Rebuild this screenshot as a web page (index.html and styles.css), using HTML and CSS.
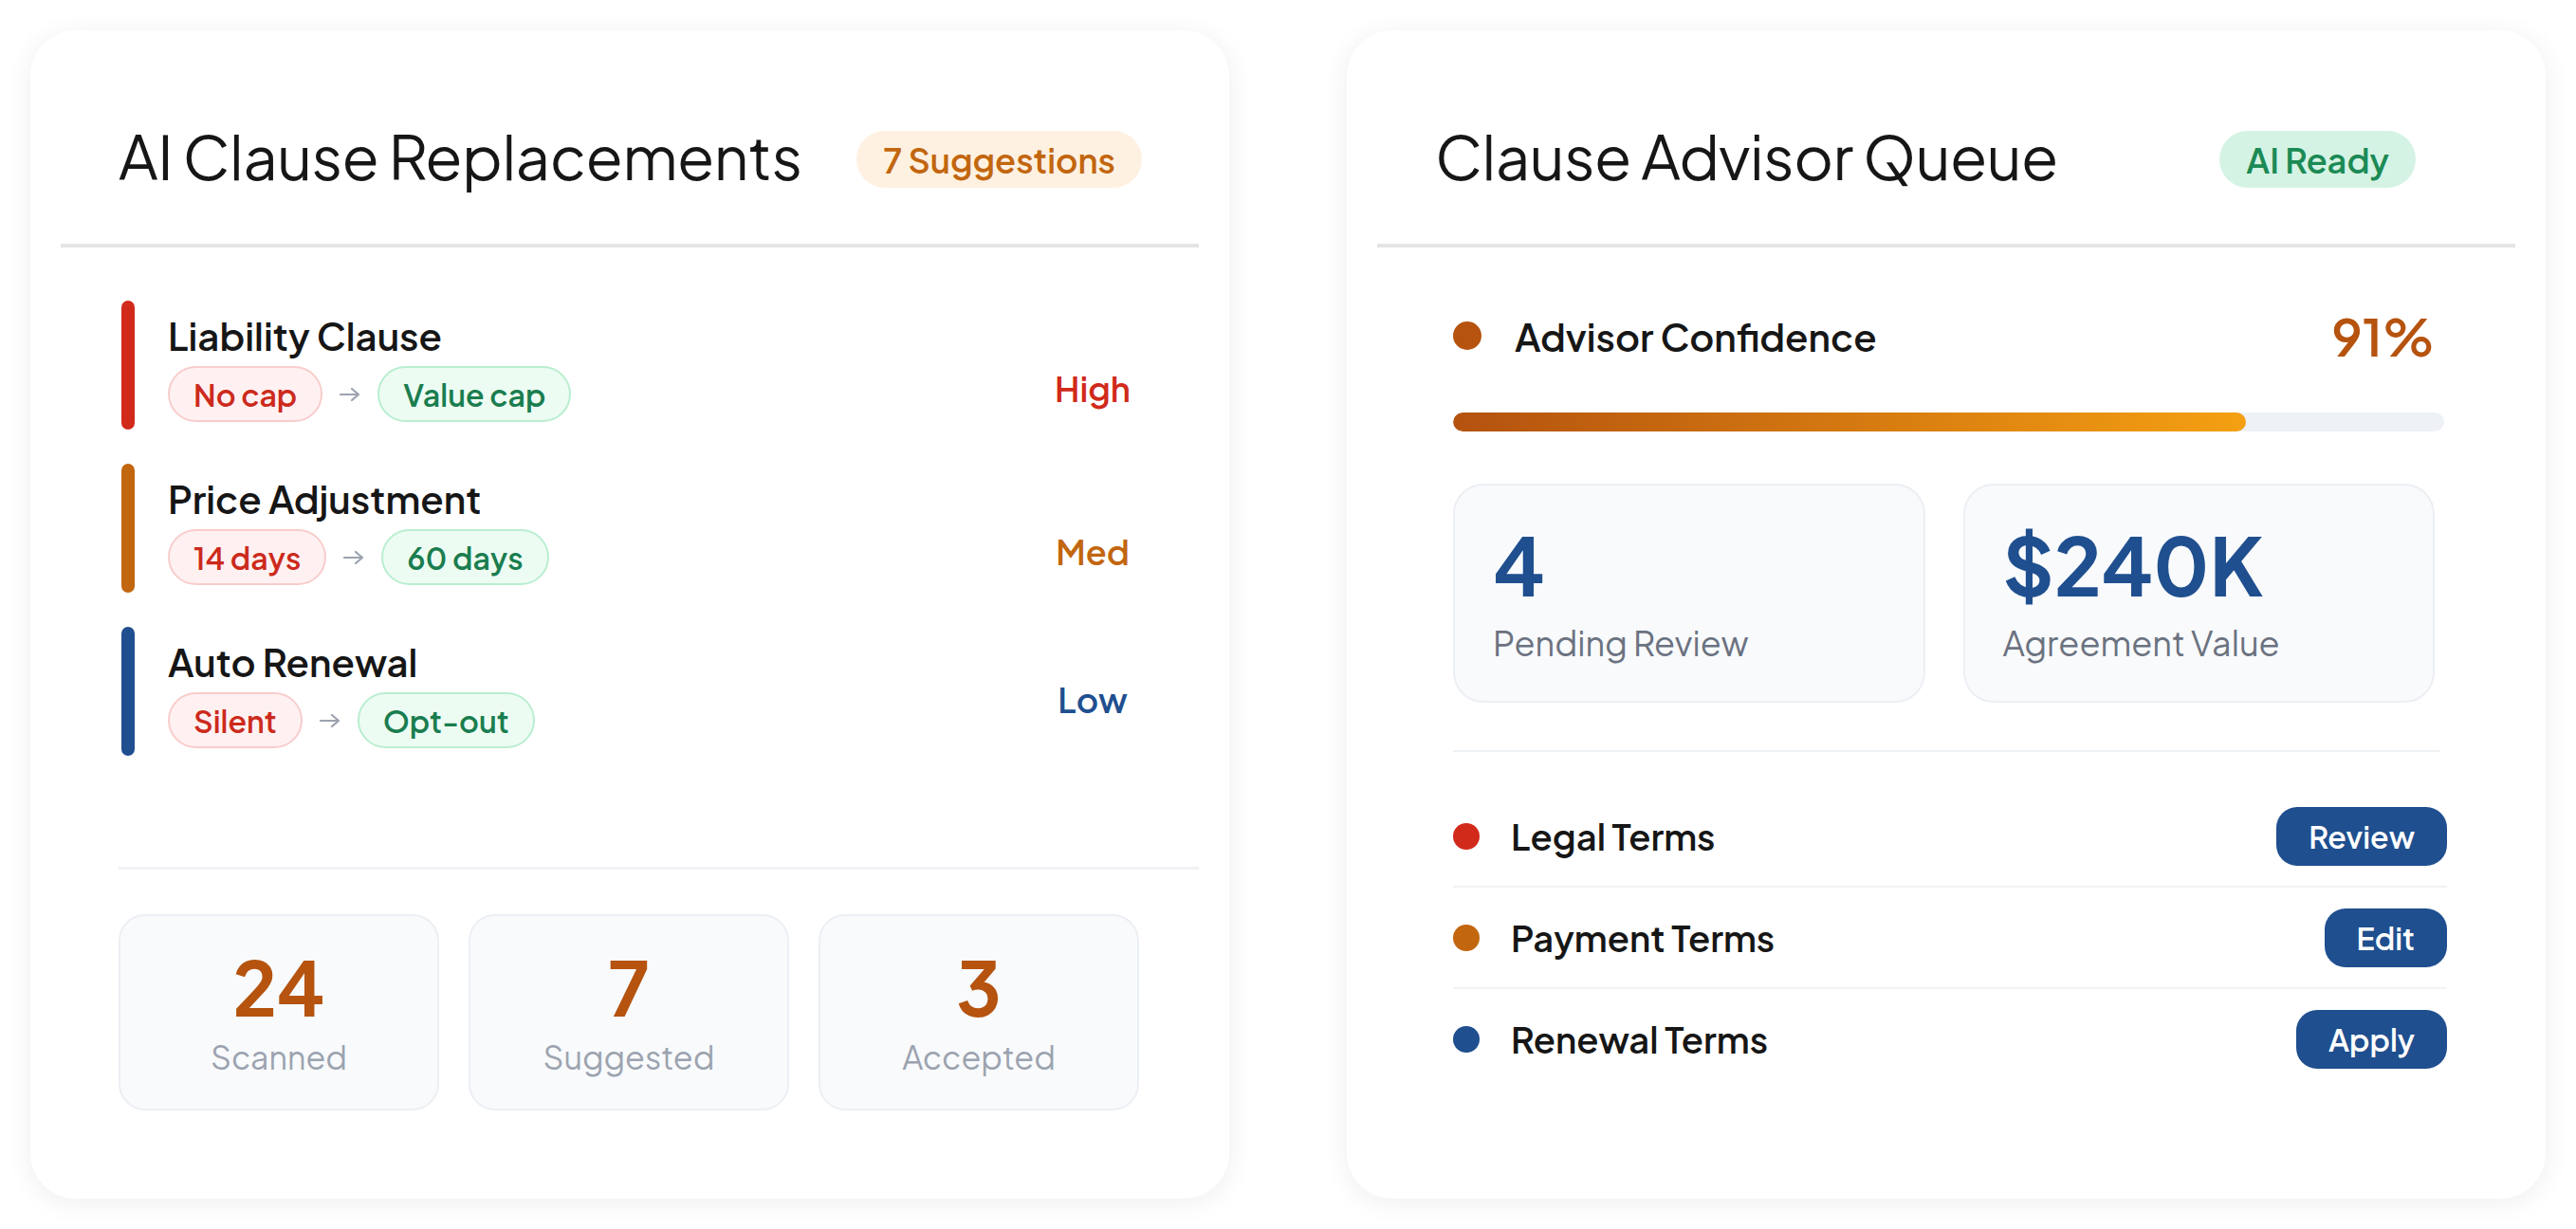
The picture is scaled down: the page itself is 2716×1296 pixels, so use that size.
FILE: index.html
```html
<!DOCTYPE html>
<html lang="en">
<head>
  <meta charset="UTF-8" />
  <meta name="viewport" content="width=device-width, initial-scale=1.0" />
  <title>Clause Review</title>
  <link rel="stylesheet" href="styles.css">
</head>
<body>
  <main class="board">
    <!-- Left card: suggested clause swaps -->
    <section class="card">
      <header class="card-head">
        <h2 class="card-title">AI Clause Replacements</h2>
        <span class="badge badge-warm">7 Suggestions</span>
      </header>
      <div class="clause-body">
        <ul class="clause-list">
          <li class="clause clause-high">
            <span class="clause-bar"></span>
            <div class="clause-main">
              <div class="clause-name">Liability Clause</div>
              <div class="swap">
                <span class="pill pill-old">No cap</span>
                <svg class="swap-arrow" viewBox="0 0 24 16" width="24" height="16"><path d="M2 8h19M14 2l7 6-7 6" /></svg>
                <span class="pill pill-new">Value cap</span>
              </div>
            </div>
            <span class="risk">High</span>
          </li>
          <li class="clause clause-med">
            <span class="clause-bar"></span>
            <div class="clause-main">
              <div class="clause-name">Price Adjustment</div>
              <div class="swap">
                <span class="pill pill-old">14 days</span>
                <svg class="swap-arrow" viewBox="0 0 24 16" width="24" height="16"><path d="M2 8h19M14 2l7 6-7 6" /></svg>
                <span class="pill pill-new">60 days</span>
              </div>
            </div>
            <span class="risk">Med</span>
          </li>
          <li class="clause clause-low">
            <span class="clause-bar"></span>
            <div class="clause-main">
              <div class="clause-name">Auto Renewal</div>
              <div class="swap">
                <span class="pill pill-old">Silent</span>
                <svg class="swap-arrow" viewBox="0 0 24 16" width="24" height="16"><path d="M2 8h19M14 2l7 6-7 6" /></svg>
                <span class="pill pill-new">Opt-out</span>
              </div>
            </div>
            <span class="risk">Low</span>
          </li>
        </ul>
        <div class="tally">
          <div class="tally-box">
            <div class="tally-num">24</div>
            <div class="tally-label">Scanned</div>
          </div>
          <div class="tally-box">
            <div class="tally-num">7</div>
            <div class="tally-label">Suggested</div>
          </div>
          <div class="tally-box">
            <div class="tally-num">3</div>
            <div class="tally-label">Accepted</div>
          </div>
        </div>
      </div>
    </section>

    <!-- Right card: advisor queue -->
    <section class="card">
      <header class="card-head">
        <h2 class="card-title">Clause Advisor Queue</h2>
        <span class="badge badge-ready">AI Ready</span>
      </header>
      <div class="advisor-body">
        <div class="confidence">
          <span class="conf-dot"></span>
          <span class="conf-label">Advisor Confidence</span>
          <span class="conf-value">91%</span>
        </div>
        <div class="meter">
          <div class="meter-fill" style="width: 80%"></div>
        </div>
        <div class="metrics">
          <div class="metric">
            <div class="metric-num">4</div>
            <div class="metric-label">Pending Review</div>
          </div>
          <div class="metric">
            <div class="metric-num">$240K</div>
            <div class="metric-label">Agreement Value</div>
          </div>
        </div>
        <div class="advisor-rule"></div>
        <ul class="queue">
          <li class="queue-row">
            <span class="queue-dot dot-red"></span>
            <span class="queue-name">Legal Terms</span>
            <button class="queue-btn">Review</button>
          </li>
          <li class="queue-row">
            <span class="queue-dot dot-orange"></span>
            <span class="queue-name">Payment Terms</span>
            <button class="queue-btn">Edit</button>
          </li>
          <li class="queue-row">
            <span class="queue-dot dot-blue"></span>
            <span class="queue-name">Renewal Terms</span>
            <button class="queue-btn">Apply</button>
          </li>
        </ul>
      </div>
    </section>
  </main>
</body>
</html>
```

FILE: styles.css
```css
:root {
  --ink: #161616;
  --red: #d12a1b;
  --orange: #c2660f;
  --rust: #b5530f;
  --blue: #1f4f8f;
  --muted: #9ca3af;
  --slate: #6b7280;
  --tile-bg: #f8fafc;
  --tile-border: #eceff3;
}

html, body {
  height: 100%;
  margin: 0;
}

* {
  box-sizing: border-box;
}

body {
  font-family: "Plus Jakarta Sans", Inter, "Noto Sans", sans-serif;
  background: #fff;
  color: var(--ink);
}

.board {
  display: flex;
  gap: 124px;
  height: 100%;
  padding: 32px;
}

/* Cards */

.card {
  flex: 1;
  display: flex;
  flex-direction: column;
  padding: 0 32px;
  background: #fff;
  border-radius: 48px;
  box-shadow: 0 4px 28px rgba(17, 24, 39, 0.07);
}

.card-head {
  height: 229px;
  padding: 39px 0 0 61px;
  display: flex;
  align-items: center;
  border-bottom: 4px solid #e5e5e5;
}

.card-title {
  margin: 0;
  font-size: 64px;
  font-weight: 400;
  letter-spacing: -0.5px;
}

.badge {
  margin-left: auto;
  margin-top: 8px;
  height: 60px;
  padding: 0 28px;
  border-radius: 30px;
  display: flex;
  align-items: center;
  font-size: 36px;
  font-weight: 600;
}

.badge-warm {
  background: #fff1e1;
  color: var(--orange);
  margin-right: 60px;
}

.badge-ready {
  background: #d5f3e4;
  color: #1c8a55;
  margin-right: 105px;
}

/* Clause swaps */

.clause-body {
  padding: 56px 0 0 61px;
}

.clause-list {
  list-style: none;
  margin: 0 0 0 3px;
  padding: 0;
  display: flex;
  flex-direction: column;
  gap: 36px;
}

.clause {
  height: 136px;
  display: flex;
}

.clause-bar {
  width: 14px;
  border-radius: 7px;
  flex-shrink: 0;
}

.clause-high .clause-bar { background: var(--red); }
.clause-med .clause-bar { background: var(--orange); }
.clause-low .clause-bar { background: var(--blue); }

.clause-main {
  flex: 1;
  margin-left: 35px;
  padding-top: 13px;
  display: flex;
  flex-direction: column;
  gap: 8px;
}

.clause-name {
  font-size: 40px;
  line-height: 48px;
  font-weight: 600;
}

.swap {
  display: flex;
  align-items: center;
  gap: 17px;
}

.pill {
  height: 59px;
  padding: 0 25px;
  border: 2px solid;
  border-radius: 30px;
  display: flex;
  align-items: center;
  font-size: 32px;
  font-weight: 600;
}

.pill-old {
  background: #fff1f1;
  border-color: #f9cccc;
  color: #cc2a1c;
}

.pill-new {
  background: #edfcf3;
  border-color: #b9eecf;
  color: #1a7d4f;
}

.swap-arrow {
  fill: none;
  stroke: var(--muted);
  stroke-width: 2.2;
  stroke-linecap: round;
  stroke-linejoin: round;
}

.risk {
  align-self: flex-end;
  width: 120px;
  margin: 0 52px 21px 0;
  text-align: center;
  font-size: 36px;
  line-height: 44px;
  font-weight: 600;
}

.clause-high .risk { color: var(--red); }
.clause-med .risk { color: var(--orange); }
.clause-low .risk { color: var(--blue); margin-bottom: 37px; }

.tally {
  margin-top: 117px;
  padding-top: 47px;
  border-top: 3px solid #f0f2f5;
  display: grid;
  grid-template-columns: repeat(3, 338px);
  gap: 31px;
}

.tally-box {
  height: 207px;
  padding-top: 35px;
  display: flex;
  flex-direction: column;
  align-items: center;
  background: var(--tile-bg);
  border: 2px solid var(--tile-border);
  border-radius: 28px;
}

.tally-num {
  font-size: 78px;
  line-height: 78px;
  font-weight: 700;
  color: var(--rust);
}

.tally-label {
  margin-top: 15px;
  font-size: 34px;
  line-height: 41px;
  color: var(--muted);
}

/* Advisor queue */

.advisor-body {
  padding: 61px 75px 0 80px;
}

.confidence {
  height: 64px;
  display: flex;
  align-items: center;
}

.conf-dot {
  width: 30px;
  height: 30px;
  border-radius: 50%;
  background: var(--rust);
}

.conf-label {
  margin-left: 35px;
  font-size: 40px;
  font-weight: 600;
}

.conf-value {
  margin: 0 10px 0 auto;
  font-size: 54px;
  font-weight: 600;
  color: var(--rust);
}

.meter {
  margin: 49px 0 0;
  height: 20px;
  border-radius: 10px;
  background: #eef2f6;
  overflow: hidden;
}

.meter-fill {
  height: 100%;
  border-radius: 10px;
  background: linear-gradient(90deg, #b4520f, #f4a012);
}

.metrics {
  margin: 55px 10px 0 0;
  display: grid;
  grid-template-columns: 1fr 1fr;
  gap: 40px;
}

.metric {
  height: 231px;
  padding: 41px 40px 0;
  background: var(--tile-bg);
  border: 2px solid var(--tile-border);
  border-radius: 32px;
}

.metric-num {
  font-size: 84px;
  line-height: 84px;
  font-weight: 700;
  color: var(--blue);
}

.metric-label {
  margin-top: 19px;
  font-size: 36px;
  line-height: 44px;
  color: var(--slate);
}

.advisor-rule {
  margin: 50px 5px 0 0;
  height: 2px;
  background: #eff2f5;
}

.queue {
  list-style: none;
  margin: 36px -3px 0 0;
  padding: 0;
}

.queue-row {
  display: flex;
  align-items: center;
  padding: 21.5px 0;
  border-bottom: 2px solid #f1f3f6;
}

.queue-row:last-child {
  border-bottom: none;
}

.queue-dot {
  width: 28px;
  height: 28px;
  border-radius: 50%;
}

.dot-red { background: var(--red); }
.dot-orange { background: var(--orange); }
.dot-blue { background: var(--blue); }

.queue-name {
  margin-left: 33px;
  font-size: 38px;
  font-weight: 600;
}

.queue-btn {
  margin-left: auto;
  height: 62px;
  padding: 0 34px;
  border: none;
  border-radius: 22px;
  background: var(--blue);
  color: #fff;
  font-family: inherit;
  font-size: 32px;
  font-weight: 600;
  cursor: pointer;
}
```
